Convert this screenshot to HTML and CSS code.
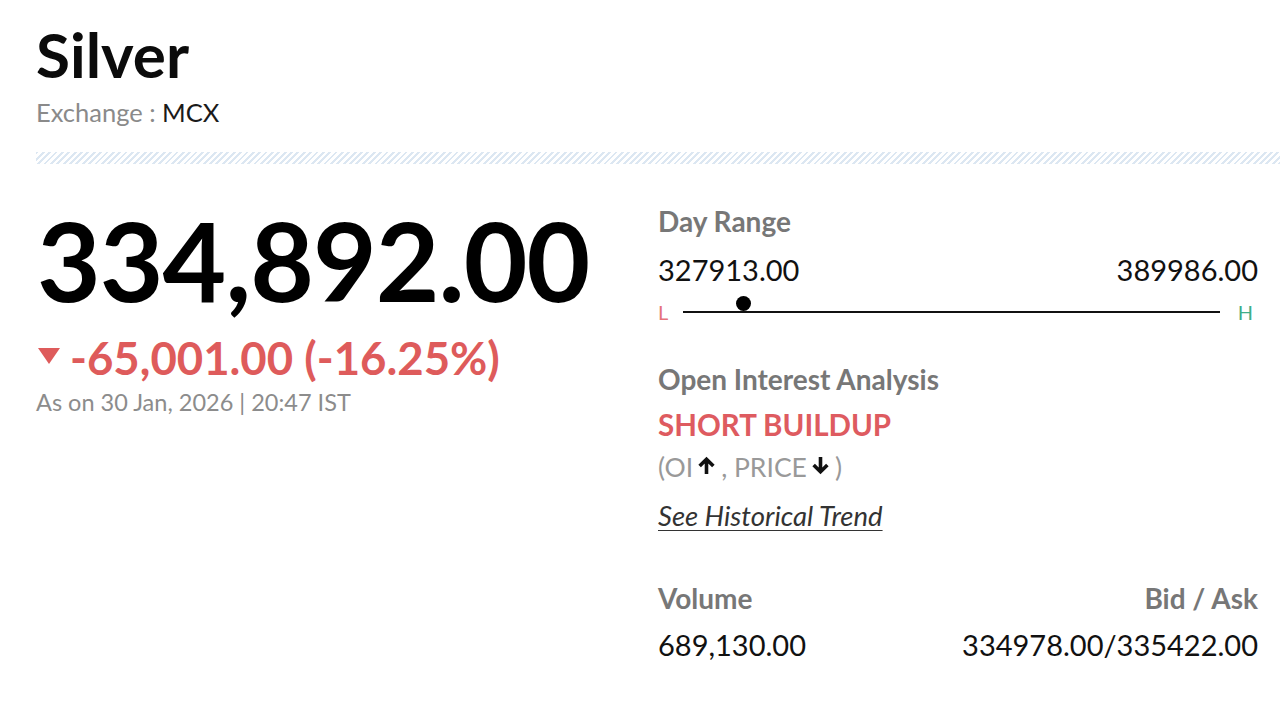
FILE: index.html
```html
<!DOCTYPE html>
<html lang="en">
<head>
<meta charset="utf-8">
<title>Silver - MCX</title>
<link rel="stylesheet" href="styles.css">
</head>
<body>
<div class="page">
  <header class="head">
    <h1 class="title">Silver</h1>
    <div class="exchange">Exchange : <span class="exchange-name">MCX</span></div>
  </header>
  <div class="stripe"></div>
  <main class="main">
    <section class="price-col">
      <div class="price">334,892.00</div>
      <div class="change">
        <svg class="tri" width="22" height="16" viewBox="0 0 22 16"><polygon points="0,0 22,0 11,16" fill="#de5b5b"/></svg>
        <span>-65,001.00 (-16.25%)</span>
      </div>
      <div class="asof">As on 30 Jan, 2026 | 20:47 IST</div>
    </section>
    <section class="info-col">
      <div class="label">Day Range</div>
      <div class="range-values">
        <span>327913.00</span>
        <span>389986.00</span>
      </div>
      <div class="slider">
        <span class="lo">L</span>
        <div class="track">
          <span class="dot" style="left: 11.24%"></span>
        </div>
        <span class="hi">H</span>
      </div>

      <div class="label oi-label">Open Interest Analysis</div>
      <div class="buildup">SHORT BUILDUP</div>
      <div class="oi-note">(OI<svg class="arrow" width="19" height="19" viewBox="0 0 18 18"><path d="M9 17V3M2.5 9.5L9 3L15.5 9.5" fill="none" stroke="#111" stroke-width="3.4"/></svg>, PRICE<svg class="arrow" width="19" height="19" viewBox="0 0 18 18"><path d="M9 1V15M2.5 8.5L9 15L15.5 8.5" fill="none" stroke="#111" stroke-width="3.4"/></svg>)</div>
      <a class="trend" href="#">See Historical Trend</a>

      <div class="pair vol-labels">
        <span class="label">Volume</span>
        <span class="label">Bid / Ask</span>
      </div>
      <div class="pair vol-values">
        <span>689,130.00</span>
        <span>334978.00/335422.00</span>
      </div>
    </section>
  </main>
</div>
</body>
</html>
```

FILE: styles.css
```css
html, body {
  margin: 0;
  padding: 0;
  background: #ffffff;
}
body {
  font-family: Lato, "Open Sans", "Liberation Sans", sans-serif;
  color: #111;
}
.page {
  padding: 17px 0 0 36px;
  width: 1244px;
  overflow: hidden;
}
.title {
  margin: 0;
  font-size: 62px;
  font-weight: 700;
  line-height: 74px;
  color: #0b0b0b;
}
.exchange {
  margin-top: 7px;
  font-size: 25.5px;
  line-height: 29px;
  color: #8a8a8a;
}
.exchange-name {
  color: #1a1a1a;
}
.stripe {
  margin-top: 25px;
  height: 12px;
  background: repeating-linear-gradient(135deg, #dce7f2 0, #dce7f2 2px, #ffffff 2px, #ffffff 4.5px);
}
.main {
  margin-top: 42px;
  display: flex;
}
.price-col {
  width: 622px;
}
.price {
  font-size: 110px;
  font-weight: 700;
  line-height: 106px;
  color: #000;
  letter-spacing: -1px;
  margin-left: 1px;
}
.change {
  margin-top: 18px;
  display: flex;
  align-items: center;
  gap: 10px;
  font-size: 45.5px;
  font-weight: 700;
  line-height: 55px;
  color: #de5b5b;
}
.tri {
  margin-left: 2px;
  margin-top: -4px;
}
.asof {
  margin-top: 3px;
  font-size: 23.5px;
  line-height: 28px;
  color: #8c8c8c;
}
.info-col {
  width: 600px;
  margin-top: -2px;
  display: flex;
  flex-direction: column;
}
.label {
  font-size: 28px;
  font-weight: 700;
  line-height: 34px;
  color: #777777;
}
.range-values {
  margin-top: 14px;
  display: flex;
  justify-content: space-between;
  font-size: 29px;
  line-height: 36px;
  color: #111;
}
.slider {
  margin-top: 12px;
  height: 24px;
  display: flex;
  align-items: center;
  font-size: 20px;
}
.lo {
  color: #e5737a;
  width: 25px;
}
.hi {
  color: #3fae8a;
  margin: 0 5px 0 18px;
}
.track {
  position: relative;
  flex: 1;
  height: 2px;
  background: #111;
}
.dot {
  position: absolute;
  bottom: 2px;
  width: 15px;
  height: 15px;
  margin-left: -7px;
  border-radius: 50%;
  background: #000;
}
.oi-label {
  margin-top: 38px;
}
.buildup {
  margin-top: 11px;
  font-size: 29.5px;
  font-weight: 700;
  line-height: 36px;
  color: #de5b60;
}
.oi-note {
  margin-top: 8px;
  font-size: 26.5px;
  line-height: 32px;
  color: #999999;
  display: flex;
  align-items: center;
}
.arrow {
  margin: 0 5px 3px 4px;
}
.trend {
  margin-top: 16px;
  align-self: flex-start;
  font-size: 27.5px;
  line-height: 34px;
  font-style: italic;
  color: #333;
  text-decoration: underline;
  text-underline-offset: 4px;
  text-decoration-thickness: 1px;
}
.pair {
  display: flex;
  justify-content: space-between;
}
.vol-labels {
  margin-top: 48px;
}
.vol-values {
  margin-top: 12px;
  font-size: 29px;
  line-height: 36px;
  color: #111;
}
```
